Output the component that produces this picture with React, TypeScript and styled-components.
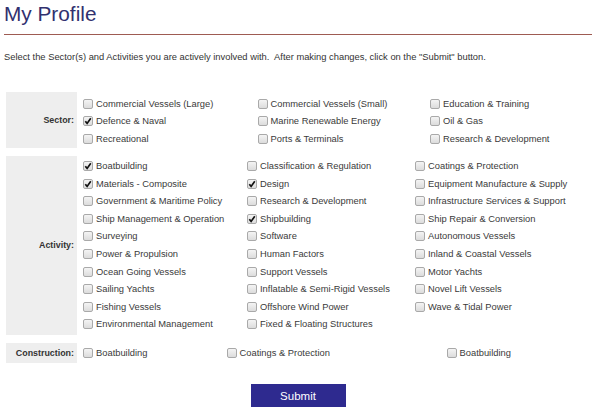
import React from 'react'
import styled, { createGlobalStyle } from 'styled-components'

const GlobalStyle = createGlobalStyle`
  html, body {
    margin: 0;
    padding: 0;
    background: #ffffff;
  }
  body {
    font-family: "Liberation Sans", Arial, sans-serif;
    color: #333333;
  }
`

const Page = styled.div`
  width: 601px;
  padding: 0 9px 0 4px;
  box-sizing: border-box;
`

const Title = styled.h1`
  margin: 2px 0 0;
  font-size: 20.8px;
  line-height: 24px;
  font-weight: normal;
  color: #31316f;
`

const Rule = styled.div`
  height: 1px;
  margin-top: 8px;
  background: #9e5b52;
`

const Intro = styled.p`
  margin: 15px 0 0;
  font-size: 9.35px;
  line-height: 14px;
  color: #333333;
`

const Form = styled.div`
  margin: 28px 0 0 2px;
  display: flex;
  flex-direction: column;
  gap: 8px;
`

const Section = styled.div`
  display: flex;
  align-items: stretch;
`

const Label = styled.div`
  width: 71px;
  flex: none;
  box-sizing: border-box;
  padding-right: 3px;
  background: #eeeeee;
  display: flex;
  align-items: center;
  justify-content: flex-end;
  font-size: 8.9px;
  font-weight: bold;
  color: #333333;
`

const Options = styled.div<{ $cols: string; $top: number; $bottom: number }>`
  display: grid;
  grid-template-columns: ${({ $cols }) => $cols};
  grid-auto-rows: 17.6px;
  padding: ${({ $top }) => $top}px 0 ${({ $bottom }) => $bottom}px 6px;
  flex: 1;
`

const Item = styled.label`
  display: flex;
  align-items: center;
  font-size: 9.35px;
  color: #3a3a3a;
  white-space: nowrap;
`

const Box = styled.span`
  width: 8px;
  height: 8px;
  flex: none;
  margin-right: 3px;
  border: 1px solid #a9a9a9;
  border-radius: 2px;
  background: linear-gradient(#f4f4f4, #dcdcdc);
  display: flex;
  align-items: center;
  justify-content: center;
`

const SubmitRow = styled.div`
  display: flex;
  justify-content: center;
  margin-top: 21px;
`

const SubmitButton = styled.button`
  width: 95px;
  height: 23px;
  border: none;
  background: #2e2a8f;
  color: #ffffff;
  font-family: "Liberation Sans", Arial, sans-serif;
  font-size: 11.5px;
  padding: 0;
  cursor: pointer;
`

type Opt = [string, boolean?]

const Check = ({ checked }: { checked: boolean }) => (
  <Box>
    {checked && (
      <svg width="8" height="8" viewBox="0 0 8 8">
        <path d="M1.3 4.3 L3.1 6.4 L6.8 1.2" fill="none" stroke="#111" strokeWidth="1.7" />
      </svg>
    )}
  </Box>
)

const Option = ({ label, checked = false }: { label: string; checked?: boolean }) => (
  <Item>
    <Check checked={checked} />
    {label}
  </Item>
)

const sectors: Opt[] = [
  ['Commercial Vessels (Large)'],
  ['Commercial Vessels (Small)'],
  ['Education & Training'],
  ['Defence & Naval', true],
  ['Marine Renewable Energy'],
  ['Oil & Gas'],
  ['Recreational'],
  ['Ports & Terminals'],
  ['Research & Development'],
]

const activities: Opt[] = [
  ['Boatbuilding', true],
  ['Classification & Regulation'],
  ['Coatings & Protection'],
  ['Materials - Composite', true],
  ['Design', true],
  ['Equipment Manufacture & Supply'],
  ['Government & Maritime Policy'],
  ['Research & Development'],
  ['Infrastructure Services & Support'],
  ['Ship Management & Operation'],
  ['Shipbuilding', true],
  ['Ship Repair & Conversion'],
  ['Surveying'],
  ['Software'],
  ['Autonomous Vessels'],
  ['Power & Propulsion'],
  ['Human Factors'],
  ['Inland & Coastal Vessels'],
  ['Ocean Going Vessels'],
  ['Support Vessels'],
  ['Motor Yachts'],
  ['Sailing Yachts'],
  ['Inflatable & Semi-Rigid Vessels'],
  ['Novel Lift Vessels'],
  ['Fishing Vessels'],
  ['Offshore Wind Power'],
  ['Wave & Tidal Power'],
  ['Environmental Management'],
  ['Fixed & Floating Structures'],
]

const construction: Opt[] = [['Boatbuilding'], ['Coatings & Protection'], ['Boatbuilding']]

const App = () => {
  return (
    <Page>
      <GlobalStyle />
      <Title>My Profile</Title>
      <Rule />
      <Intro>
        Select the Sector(s) and Activities you are actively involved with.&nbsp; After making changes, click on the
        "Submit" button.
      </Intro>
      <Form>
        <Section>
          <Label>Sector:</Label>
          <Options $cols="174.5px 172.5px 1fr" $top={3} $bottom={0}>
            {sectors.map(([l, c], i) => (
              <Option key={i} label={l} checked={c} />
            ))}
          </Options>
        </Section>
        <Section>
          <Label>Activity:</Label>
          <Options $cols="164px 168px 1fr" $top={1.5} $bottom={1.5}>
            {activities.map(([l, c], i) => (
              <Option key={i} label={l} checked={c} />
            ))}
          </Options>
        </Section>
        <Section>
          <Label>Construction:</Label>
          <Options $cols="143.5px 220px 1fr" $top={1.5} $bottom={1.5}>
            {construction.map(([l, c], i) => (
              <Option key={i} label={l} checked={c} />
            ))}
          </Options>
        </Section>
      </Form>
      <SubmitRow>
        <SubmitButton>Submit</SubmitButton>
      </SubmitRow>
    </Page>
  )
}

export default App
